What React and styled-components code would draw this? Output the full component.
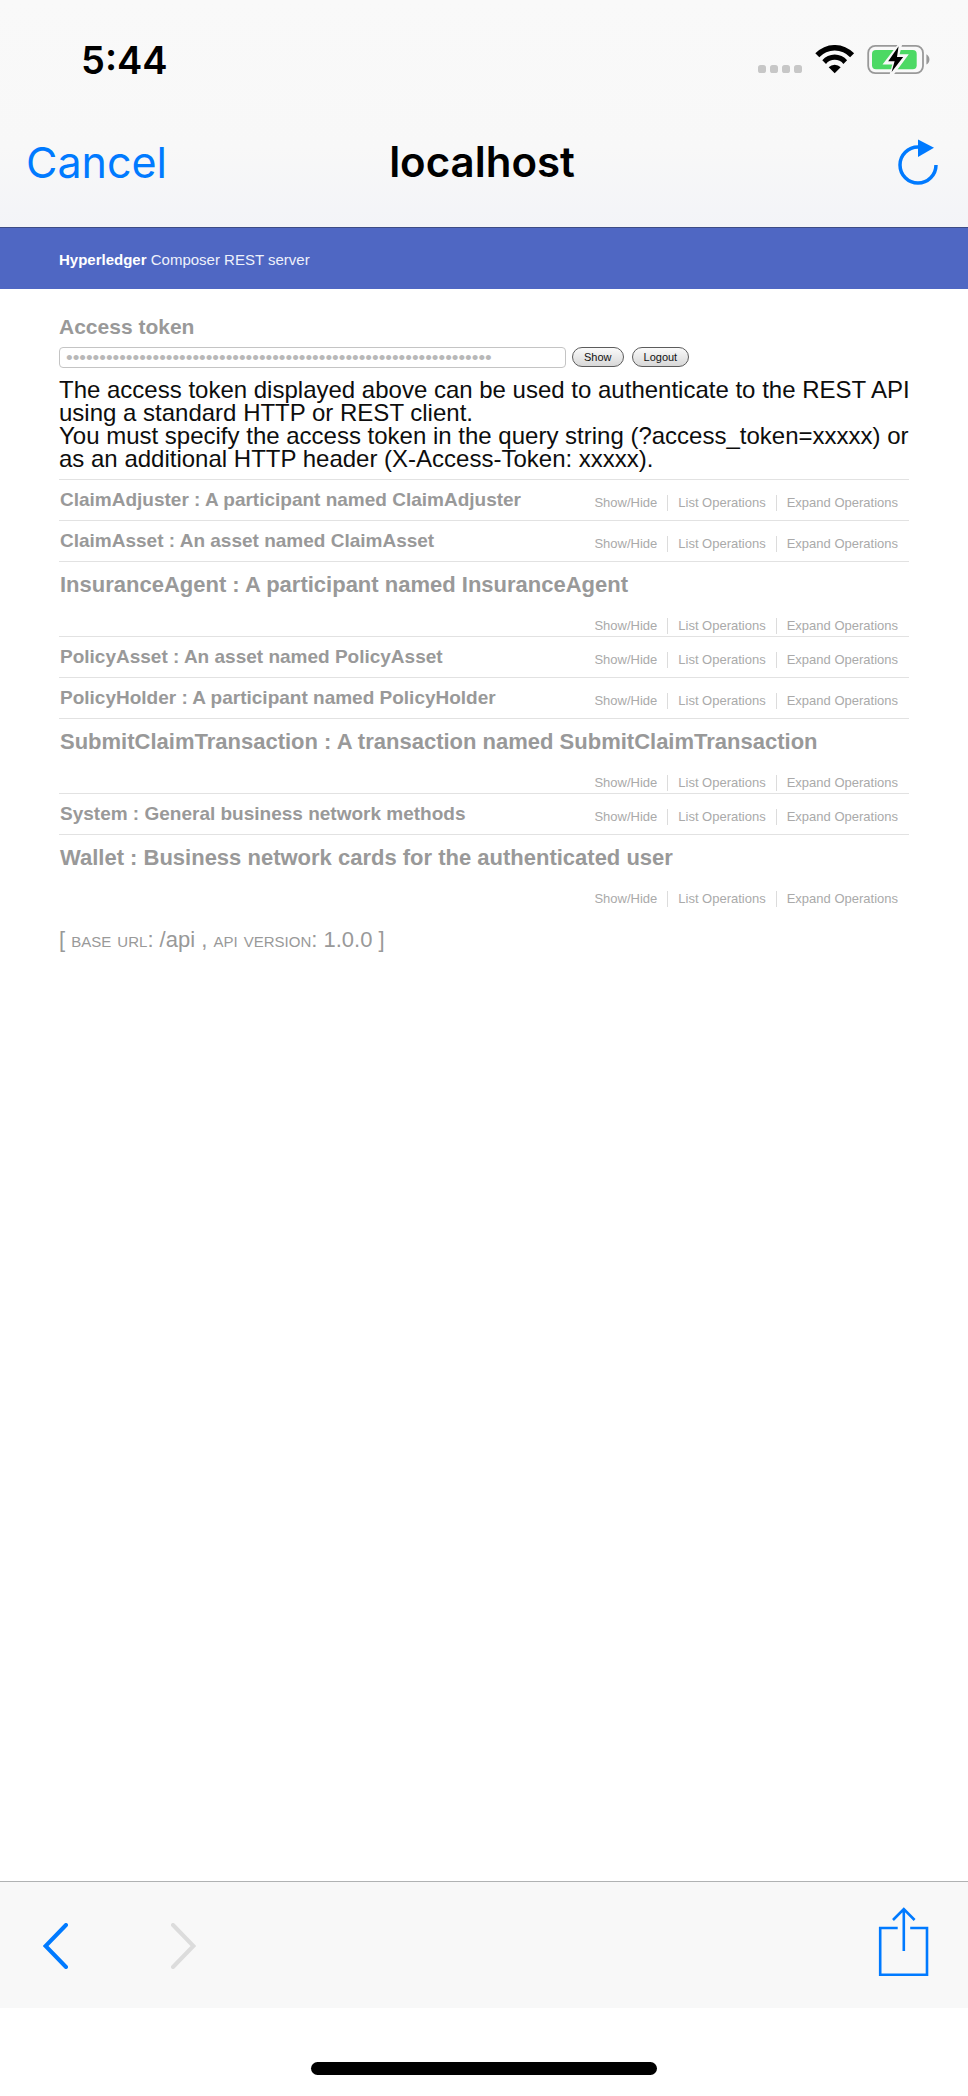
import React from "react";
import styled, { createGlobalStyle } from "styled-components";

const GlobalStyle = createGlobalStyle`
  *, *::before, *::after { box-sizing: border-box; }
  body { margin: 0; background: #fff; }
  h1, h2, p, ul { margin: 0; padding: 0; }
  ul { list-style: none; }
  button { font: inherit; cursor: pointer; }
`;

const BLUE = "#007aff";
const SYSTEM_FONT = `Inter, "Liberation Sans", sans-serif`;
const PAGE_FONT = `"Liberation Sans", Arial, sans-serif`;

const Screen = styled.div`
  display: flex;
  flex-direction: column;
  min-height: 100vh;
  font-family: ${PAGE_FONT};
  color: #000;
`;

const TopChrome = styled.header`
  font-family: ${SYSTEM_FONT};
  background: linear-gradient(#f9f9f9, #f8f8f8 65%, #f3f4f8);
  border-bottom: 1px solid #3d4c86;
`;

const StatusBar = styled.div`
  display: flex;
  align-items: center;
  justify-content: space-between;
  height: 119px;
  padding: 0 37px 0 81px;
`;

const Clock = styled.time`
  font-size: 38px;
  font-weight: 600;
`;

const StatusIcons = styled.div`
  display: flex;
  gap: 12px;
`;

const NavBar = styled.nav`
  display: grid;
  grid-template-columns: 1fr auto 1fr;
  align-items: center;
  height: 108px;
  padding: 0 30px 22px 26px;
`;

const BarButton = styled.button`
  display: block;
  justify-self: ${(p) => (p.$end ? "end" : "start")};
  padding: 0;
  border: 0;
  background: none;
  color: ${BLUE};
  font-size: 43px;
  line-height: 1;

  &:disabled {
    color: #dcdcdc;
    cursor: default;
  }

  svg { display: block; }
`;

const NavTitle = styled.h1`
  font-size: 42px;
  font-weight: 600;
  line-height: 1;
`;

const Banner = styled.div`
  height: 61px;
  padding: 23px 59px 0;
  background: #4f67c3;
  color: #eef1fb;
  font-size: 15px;
  line-height: 18px;

  b { color: #fff; }
`;

const Content = styled.main`
  flex: 1;
  padding: 26px 59px;
`;

const TokenLabel = styled.label`
  display: block;
  color: #999;
  font-size: 21px;
  font-weight: 700;
  line-height: 24px;
`;

const TokenRow = styled.form`
  display: flex;
  align-items: flex-start;
  gap: 8px;
  margin-top: 8px;
`;

const TokenInput = styled.input`
  flex: 0 1 507px;
  min-width: 0;
  height: 21px;
  margin: 0 -2px 0 0;
  padding: 0 6px;
  border: 1px solid #c4c4c4;
  border-radius: 4px;
  background: #fff;
  color: #b8b8b8;
  font-family: ${PAGE_FONT};
  font-size: 19px;
  line-height: 19px;
  outline: none;
`;

const PillButton = styled.button`
  height: 20px;
  padding: 0 11px;
  border: 1px solid #5c5c5c;
  border-radius: 10px;
  background: linear-gradient(#fafafa, #d8d8d8);
  color: #111;
  font-size: 11px;
  line-height: 18px;
`;

const Description = styled.p`
  margin: 10px -16px 9px 0;
  color: #0d0d0d;
  font-size: 24px;
  line-height: 23px;
`;

const Resource = styled.li`
  display: flex;
  flex-direction: ${(p) => (p.$stacked ? "column" : "row")};
  justify-content: ${(p) => (p.$stacked ? "flex-start" : "space-between")};
  min-height: ${(p) => (p.$stacked ? 75 : 41)}px;
  padding: ${(p) => (p.$stacked ? 10 : 9)}px 11px 0 1px;
  border-top: 1px solid #e2e2e2;
`;

const ResourceTitle = styled.h2`
  color: #999;
  font-size: ${(p) => (p.$stacked ? 22 : 19)}px;
  line-height: ${(p) => (p.$stacked ? 26 : 22)}px;
`;

const Options = styled.ul`
  display: flex;
  align-self: ${(p) => (p.$stacked ? "flex-end" : "flex-start")};
  margin-top: ${(p) => (p.$stacked ? 20 : 6)}px;
`;

const Option = styled.li`
  padding: 0 10px;
  border-right: 1px solid #dcdcdc;
  font-size: 13px;
  line-height: 16px;

  &:last-child {
    padding-right: 0;
    border-right: 0;
  }

  a {
    color: #aaa;
    text-decoration: none;
  }
`;

const ApiInfo = styled.footer`
  margin-top: 18px;
  color: #999;
  font-size: 22px;
  line-height: 26px;

  span { font-variant: small-caps; }
`;

const Toolbar = styled.nav`
  display: flex;
  align-items: center;
  height: 127px;
  padding: 2px 38px 0 43px;
  border-top: 1px solid #b0b2b3;
  background: #f8f8f8;
`;

const History = styled.div`
  display: flex;
  flex: 1;
  gap: 103px;
`;

const HomeArea = styled.div`
  display: flex;
  justify-content: center;
  padding: 54px 0 21px;
`;

const HomeIndicator = styled.div`
  width: 346px;
  height: 13px;
  border-radius: 7px;
  background: #000;
`;

const SignalDots = () => (
  <svg width="44" height="30" viewBox="0 0 44 30" fill="#c7c7c7" aria-hidden="true">
    {[0, 12, 24, 36].map((x) => (
      <rect key={x} x={x} y="20" width="8" height="8" rx="2.6" />
    ))}
  </svg>
);

const Wifi = () => (
  <svg width="41" height="30" viewBox="0 0 41 30" aria-hidden="true">
    <path d="M1.3 8.3A26.8 26.8 0 0 1 40.1 8.3L36.1 12.2A21 21 0 0 0 5.3 12.2Z" />
    <path d="M8.3 15.3A16 16 0 0 1 33.1 15.3L29.4 19A11 11 0 0 0 12 19Z" />
    <path d="M14.7 22.3A8.4 8.4 0 0 1 26.7 22.3L20.7 28.3Z" />
  </svg>
);

const Battery = () => (
  <svg width="64" height="30" viewBox="0 0 64 30" aria-hidden="true">
    <rect x="1.2" y="0.9" width="54.8" height="27.2" rx="7" fill="none" stroke="#999" strokeWidth="1.8" />
    <rect x="5" y="5" width="44.7" height="19.3" rx="4" fill="#4cd964" />
    <path d="M59.4 9.3Q62.4 11 62.4 14.5Q62.4 18 59.4 19.6Z" fill="#999" />
    <path d="M30.5 0L15.5 19.4H25.3L22.6 29.5H26.8L41.8 9.2H32.6L35 0Z" fill="#f8f8f8" />
    <path d="M31.6 1.3L21.2 16.3H27.6L24.6 27L36.2 12.1H30Z" />
  </svg>
);

const Reload = () => (
  <svg width="40" height="46" viewBox="0 0 40 46" aria-hidden="true">
    <path d="M20 8A18 18 0 1 0 38 26" fill="none" stroke="currentColor" strokeWidth="3.5" />
    <path d="M20 0.6L36 8.8L20 18Z" fill="currentColor" />
  </svg>
);

const Chevron = ({ forward }) => (
  <svg width="25" height="46" viewBox="0 0 25 46" fill="none" stroke="currentColor" strokeWidth="4" strokeLinecap="round" aria-hidden="true">
    <path d={forward ? "M2 2L22.4 23L2 44" : "M23 2L2.6 23L23 44"} />
  </svg>
);

const Share = () => (
  <svg width="53" height="80" viewBox="0 0 53 80" fill="none" stroke="currentColor" strokeWidth="2.6" aria-hidden="true">
    <path d="M20.7 22H3.2V68.7H50V22H33.2" />
    <path d="M26.8 3V45M16 14L26.8 3L37.6 14" />
  </svg>
);

const RESOURCES = [
  { title: "ClaimAdjuster : A participant named ClaimAdjuster" },
  { title: "ClaimAsset : An asset named ClaimAsset" },
  { title: "InsuranceAgent : A participant named InsuranceAgent", stacked: true },
  { title: "PolicyAsset : An asset named PolicyAsset" },
  { title: "PolicyHolder : A participant named PolicyHolder" },
  { title: "SubmitClaimTransaction : A transaction named SubmitClaimTransaction", stacked: true },
  { title: "System : General business network methods" },
  { title: "Wallet : Business network cards for the authenticated user", stacked: true },
];

const OPTIONS = ["Show/Hide", "List Operations", "Expand Operations"];

export default function App() {
  return (
    <Screen>
      <GlobalStyle />
      <TopChrome>
        <StatusBar>
          <Clock>5:44</Clock>
          <StatusIcons>
            <SignalDots />
            <Wifi />
            <Battery />
          </StatusIcons>
        </StatusBar>
        <NavBar>
          <BarButton type="button">Cancel</BarButton>
          <NavTitle>localhost</NavTitle>
          <BarButton type="button" $end aria-label="Reload">
            <Reload />
          </BarButton>
        </NavBar>
      </TopChrome>

      <Banner>
        <b>Hyperledger</b> Composer REST server
      </Banner>

      <Content>
        <TokenLabel htmlFor="token">Access token</TokenLabel>
        <TokenRow onSubmit={(e) => e.preventDefault()}>
          <TokenInput id="token" type="password" readOnly value={"x".repeat(64)} />
          <PillButton type="button">Show</PillButton>
          <PillButton type="button">Logout</PillButton>
        </TokenRow>
        <Description>
          The access token displayed above can be used to authenticate to the REST API
          using a standard HTTP or REST client.
          <br />
          You must specify the access token in the query string (?access_token=xxxxx) or
          as an additional HTTP header (X-Access-Token: xxxxx).
        </Description>

        <ul>
          {RESOURCES.map(({ title, stacked }) => (
            <Resource key={title} $stacked={stacked}>
              <ResourceTitle $stacked={stacked}>{title}</ResourceTitle>
              <Options $stacked={stacked}>
                {OPTIONS.map((name) => (
                  <Option key={name}>
                    <a href="#">{name}</a>
                  </Option>
                ))}
              </Options>
            </Resource>
          ))}
        </ul>

        <ApiInfo>
          [ <span>base url</span>: /api , <span>api version</span>: 1.0.0 ]
        </ApiInfo>
      </Content>

      <Toolbar aria-label="Browser">
        <History>
          <BarButton type="button" aria-label="Back">
            <Chevron />
          </BarButton>
          <BarButton type="button" aria-label="Forward" disabled>
            <Chevron forward />
          </BarButton>
        </History>
        <BarButton type="button" aria-label="Share">
          <Share />
        </BarButton>
      </Toolbar>
      <HomeArea>
        <HomeIndicator />
      </HomeArea>
    </Screen>
  );
}
